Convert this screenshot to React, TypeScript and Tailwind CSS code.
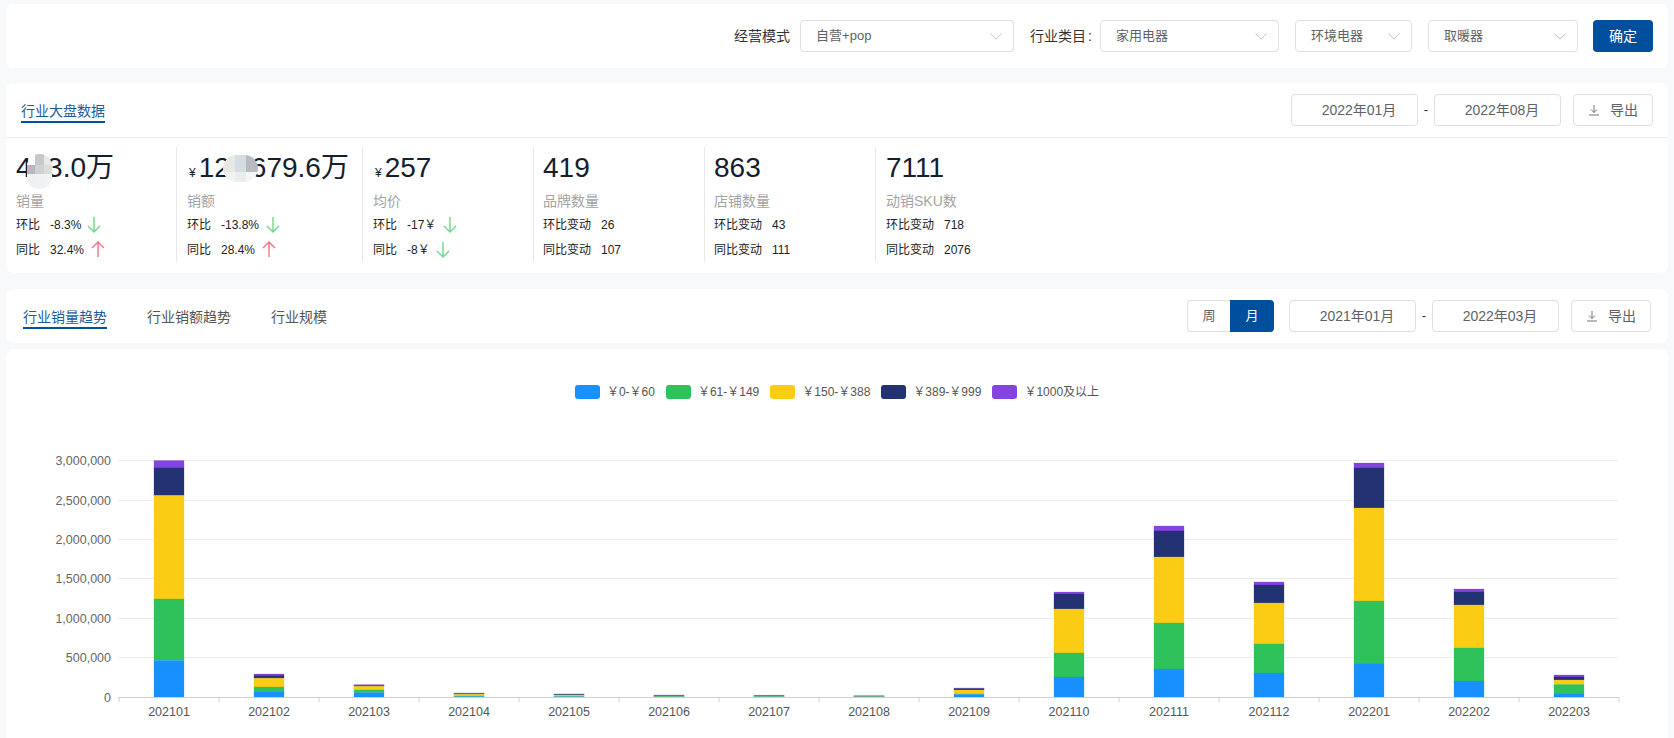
import React from 'react';

const colors = ['#8543e0', '#223273', '#facc14', '#2fc25b', '#1890ff'];

const legend = [
  { label: '￥0-￥60', color: 'bg-[#1890ff]' },
  { label: '￥61-￥149', color: 'bg-[#2fc25b]' },
  { label: '￥150-￥388', color: 'bg-[#facc14]' },
  { label: '￥389-￥999', color: 'bg-[#223273]' },
  { label: '￥1000及以上', color: 'bg-[#8543e0]' },
];

// y position of each segment's top edge: purple, navy, yellow, green, blue
const bars: { name: string; tops: number[] }[] = [
  { name: '202101', tops: [460.5, 467.5, 495.5, 599, 660.5] },
  { name: '202102', tops: [674, 675.3, 678.3, 687, 692] },
  { name: '202103', tops: [684.7, 685.3, 686.3, 690, 692.7] },
  { name: '202104', tops: [693, 693.7, 694.3, 696, 696.7] },
  { name: '202105', tops: [694, 694.3, 695, 696.3, 696.8] },
  { name: '202106', tops: [695, 695.8, 696, 696.5, 696.9] },
  { name: '202107', tops: [695.2, 695.8, 696, 696.5, 696.9] },
  { name: '202108', tops: [695.7, 696.2, 696.4, 696.7, 696.9] },
  { name: '202109', tops: [688, 688.5, 690, 694, 694.5] },
  { name: '202110', tops: [592, 594, 609, 653, 677] },
  { name: '202111', tops: [526, 531, 557, 623, 669] },
  { name: '202112', tops: [582, 585, 603, 644, 673] },
  { name: '202201', tops: [463, 468, 508, 601, 664] },
  { name: '202202', tops: [589, 592, 605, 648, 681] },
  { name: '202203', tops: [675, 677, 680, 684.5, 694] },
];

const yTicks = [
  { label: '3,000,000', y: 460.5 },
  { label: '2,500,000', y: 500.5 },
  { label: '2,000,000', y: 539.5 },
  { label: '1,500,000', y: 578.5 },
  { label: '1,000,000', y: 618.5 },
  { label: '500,000', y: 657.5 },
  { label: '0', y: 697 },
];

function Chevron() {
  return (
    <svg width="12" height="7" viewBox="0 0 12 7" fill="none" stroke="#c0c4cc" strokeWidth="1">
      <path d="M0.5 0.5 6 6.2 11.5 0.5" />
    </svg>
  );
}

function Select({ text, width }: { text: string; width: string }) {
  return (
    <div className={`${width} h-8 flex items-center justify-between pl-[15px] pr-[11px] border border-[#dcdfe6] rounded text-[13px] text-[#606266]`}>
      <span>{text}</span>
      <Chevron />
    </div>
  );
}

function DateBox({ text }: { text: string }) {
  return (
    <div className="w-[127px] h-8 flex items-center justify-center pl-[9px] border border-[#dcdfe6] rounded text-sm text-[#606266]">
      {text}
    </div>
  );
}

function ExportBtn() {
  return (
    <div className="w-[80px] h-8 flex items-center justify-center gap-[10px] border border-[#dcdfe6] rounded text-sm text-[#606266]">
      <svg width="12" height="12" viewBox="0 0 12 12" fill="none" stroke="#6f747d" strokeWidth="1">
        <path d="M6 1v7.5M3 5.5l3 3 3-3M1 11h10" />
      </svg>
      导出
    </div>
  );
}

function DateRange({ from, to }: { from: string; to: string }) {
  return (
    <div className="flex items-center">
      <DateBox text={from} />
      <span className="w-[16px] text-center text-[13px] text-[#333]">-</span>
      <DateBox text={to} />
      <div className="w-3" />
      <ExportBtn />
    </div>
  );
}

function Tab({ text, active, className }: { text: string; active?: boolean; className?: string }) {
  return (
    <div className={`text-sm leading-[18px] ${active ? 'text-[#1c5c9c] border-b-2 border-[#00509d]' : 'text-[#555]'} ${className ?? ''}`}>
      {text}
    </div>
  );
}

function Arrow({ up }: { up?: boolean }) {
  return (
    <svg width="14" height="17" viewBox="0 0 14 17" fill="none" stroke={up ? '#ff6f86' : '#6fd98a'} strokeWidth="1.4">
      {up ? <path d="M7 16V1M1 7l6-6 6 6" /> : <path d="M7 1v15M1 10l6 6 6-6" />}
    </svg>
  );
}

function Row({ label, value, arrow, gap }: { label: string; value: string; arrow?: 'up' | 'down'; gap?: string }) {
  return (
    <div className="h-[25px] flex items-center text-xs text-[#222]">
      <span>{label}</span>
      <span className="ml-[10px]">{value}</span>
      {arrow && (
        <span className={gap ?? 'ml-2'}>
          <Arrow up={arrow === 'up'} />
        </span>
      )}
    </div>
  );
}

function Stat({
  width,
  value,
  label,
  last,
  pad,
  children,
}: {
  width: string;
  value: React.ReactNode;
  label: string;
  last?: boolean;
  pad?: string;
  children: React.ReactNode;
}) {
  return (
    <div className={`${width} ${pad ?? 'pl-[10px]'} relative ${last ? '' : 'border-r border-[#e8e8e8]'}`}>
      <div className="h-[38px] leading-[42px] text-[28px] text-[#14202e] whitespace-nowrap">{value}</div>
      <div className="h-5 mt-[6px] leading-5 text-sm text-[#a3a3a3]">{label}</div>
      <div className="mt-[1px]">{children}</div>
    </div>
  );
}

function Yen() {
  return <span className="text-xs ml-[2px] mr-[3px]">¥</span>;
}

export default function App() {
  return (
    <div className="w-[1674px] h-[738px] overflow-hidden bg-[#f8f9fb] px-[6px] pt-1 font-['Liberation_Sans','Noto_Sans_CJK_SC',sans-serif]">
      {/* Filters */}
      <div className="h-16 bg-white rounded-lg flex items-center justify-end pr-[15px]">
        <span className="text-sm text-[#333] mr-[10px]">经营模式</span>
        <Select text="自营+pop" width="w-[214px]" />
        <span className="text-sm text-[#333] ml-4 mr-2">
          行业类目<span className="ml-[2px]">:</span>
        </span>
        <Select text="家用电器" width="w-[179px]" />
        <div className="w-4" />
        <Select text="环境电器" width="w-[117px]" />
        <div className="w-4" />
        <Select text="取暖器" width="w-[150px]" />
        <div className="w-[15px]" />
        <div className="w-[60px] h-8 flex items-center justify-center rounded bg-[#004f9c] text-sm text-white">确定</div>
      </div>

      {/* Market overview */}
      <div className="mt-[15px] h-[190px] bg-white rounded-lg">
        <div className="h-[55px] border-b border-[#ececec] flex items-center justify-between pl-[15px] pr-[15px]">
          <div className="self-start mt-[19px]">
            <Tab text="行业大盘数据" active className="pb-[1px]" />
          </div>
          <div className="mt-[-1px]">
            <DateRange from="2022年01月" to="2022年08月" />
          </div>
        </div>
        <div className="flex pt-[9px]">
          <Stat
            width="w-[171px]"
            label="销量"
            value={
              <>
                4<span className="inline-block w-[15.5px]" />
                3.0万
                <div className="absolute left-[21px] top-[7px] w-[25px] h-[35px] rounded-[12px] overflow-hidden grid grid-cols-3 grid-rows-[11px_9px_15px]">
                  <div className="bg-white" />
                  <div className="bg-[#c7c8cc]" />
                  <div className="bg-[#e8e8e8]" />
                  <div className="bg-[#b6b8c0]" />
                  <div className="bg-[#cfd0d2]" />
                  <div className="bg-[#dcdcd8]" />
                  <div className="bg-[#eff0f2]" />
                  <div className="bg-[#f0f1f3]" />
                  <div className="bg-[#f3f3f4]" />
                </div>
              </>
            }
          >
            <Row label="环比" value="-8.3%" arrow="down" gap="ml-[6px]" />
            <Row label="同比" value="32.4%" arrow="up" gap="ml-[7px]" />
          </Stat>
          <Stat
            width="w-[186px]"
            label="销额"
            value={
              <>
                <Yen />
                12<span className="inline-block w-[21px]" />
                679.6万
                <div className="absolute left-[46px] top-[8px] w-[35px] h-[27px] rounded-[14px] overflow-hidden grid grid-cols-3 grid-rows-[17px_10px]">
                  <div className="bg-[#e8e8e4]" />
                  <div className="bg-[#d3dde3]" />
                  <div className="bg-[#b8babf]" />
                  <div className="bg-[#f2f4f4]" />
                  <div className="bg-[#e8eeee]" />
                  <div className="bg-[#f4f5f6]" />
                </div>
              </>
            }
          >
            <Row label="环比" value="-13.8%" arrow="down" gap="ml-[7px]" />
            <Row label="同比" value="28.4%" arrow="up" gap="ml-[7px]" />
          </Stat>
          <Stat
            width="w-[171px]"
            label="均价"
            value={
              <>
                <Yen />
                257
              </>
            }
          >
            <Row label="环比" value="-17￥" arrow="down" gap="ml-[7px]" />
            <Row label="同比" value="-8￥" arrow="down" gap="ml-[6px]" />
          </Stat>
          <Stat width="w-[171px]" label="品牌数量" value="419" pad="pl-[9px]">
            <Row label="环比变动" value="26" />
            <Row label="同比变动" value="107" />
          </Stat>
          <Stat width="w-[171px]" label="店铺数量" value="863" pad="pl-[9px]">
            <Row label="环比变动" value="43" />
            <Row label="同比变动" value="111" />
          </Stat>
          <Stat width="w-[171px]" label="动销SKU数" value="7111" last>
            <Row label="环比变动" value="718" />
            <Row label="同比变动" value="2076" />
          </Stat>
        </div>
      </div>

      {/* Trend tabs */}
      <div className="mt-4 h-[54px] bg-white rounded-lg flex items-center justify-between pl-[17px] pr-[17px]">
        <div className="flex gap-10 self-start pt-[19px]">
          <Tab text="行业销量趋势" active className="pb-[1px]" />
          <Tab text="行业销额趋势" />
          <Tab text="行业规模" />
        </div>
        <div className="flex items-center">
          <div className="flex h-8 text-[13px]">
            <div className="w-[43px] flex items-center justify-center border border-r-0 border-[#dcdfe6] rounded-l text-[#606266]">周</div>
            <div className="w-[44px] flex items-center justify-center bg-[#004f9c] rounded-r text-white">月</div>
          </div>
          <div className="w-[15px]" />
          <DateRange from="2021年01月" to="2022年03月" />
        </div>
      </div>

      {/* Chart */}
      <div className="mt-[6px] h-[400px] bg-white rounded-lg pt-[36px]">
        <div className="flex justify-center gap-[11px] h-[14px]">
          {legend.map((item) => (
            <div key={item.label} className="flex items-center gap-[7px] text-xs leading-[14px] text-[#555]">
              <div className={`w-[25px] h-[14px] rounded-[3px] ${item.color}`} />
              {item.label}
            </div>
          ))}
        </div>
        <svg width="1662" height="339" viewBox="6 399 1662 339" className="block">
          {yTicks.map((t) => (
            <g key={t.label}>
              {t.y !== 697 && <line x1="118" x2="1618" y1={t.y} y2={t.y} stroke="#ececec" />}
              <text x="111" y={t.y + 4.5} textAnchor="end" fontSize="12.5" fill="#666">
                {t.label}
              </text>
            </g>
          ))}
          {bars.map((b, i) => (
            <g key={b.name}>
              {b.tops.map((top, j) => (
                <rect
                  key={j}
                  x={154 + i * 100}
                  y={top}
                  width="30"
                  height={(j < 4 ? b.tops[j + 1] : 697) - top}
                  fill={colors[j]}
                  stroke={colors[j]}
                  strokeOpacity="0.25"
                />
              ))}
              <text x={169 + i * 100} y="716" textAnchor="middle" fontSize="12.5" fill="#555">
                {b.name}
              </text>
            </g>
          ))}
          <line x1="118" x2="1619" y1="697.5" y2="697.5" stroke="#cfcfcf" />
          {Array.from({ length: 16 }, (_, i) => (
            <line key={i} x1={119 + i * 100} x2={119 + i * 100} y1="697" y2="702" stroke="#cfcfcf" />
          ))}
        </svg>
      </div>
    </div>
  );
}
